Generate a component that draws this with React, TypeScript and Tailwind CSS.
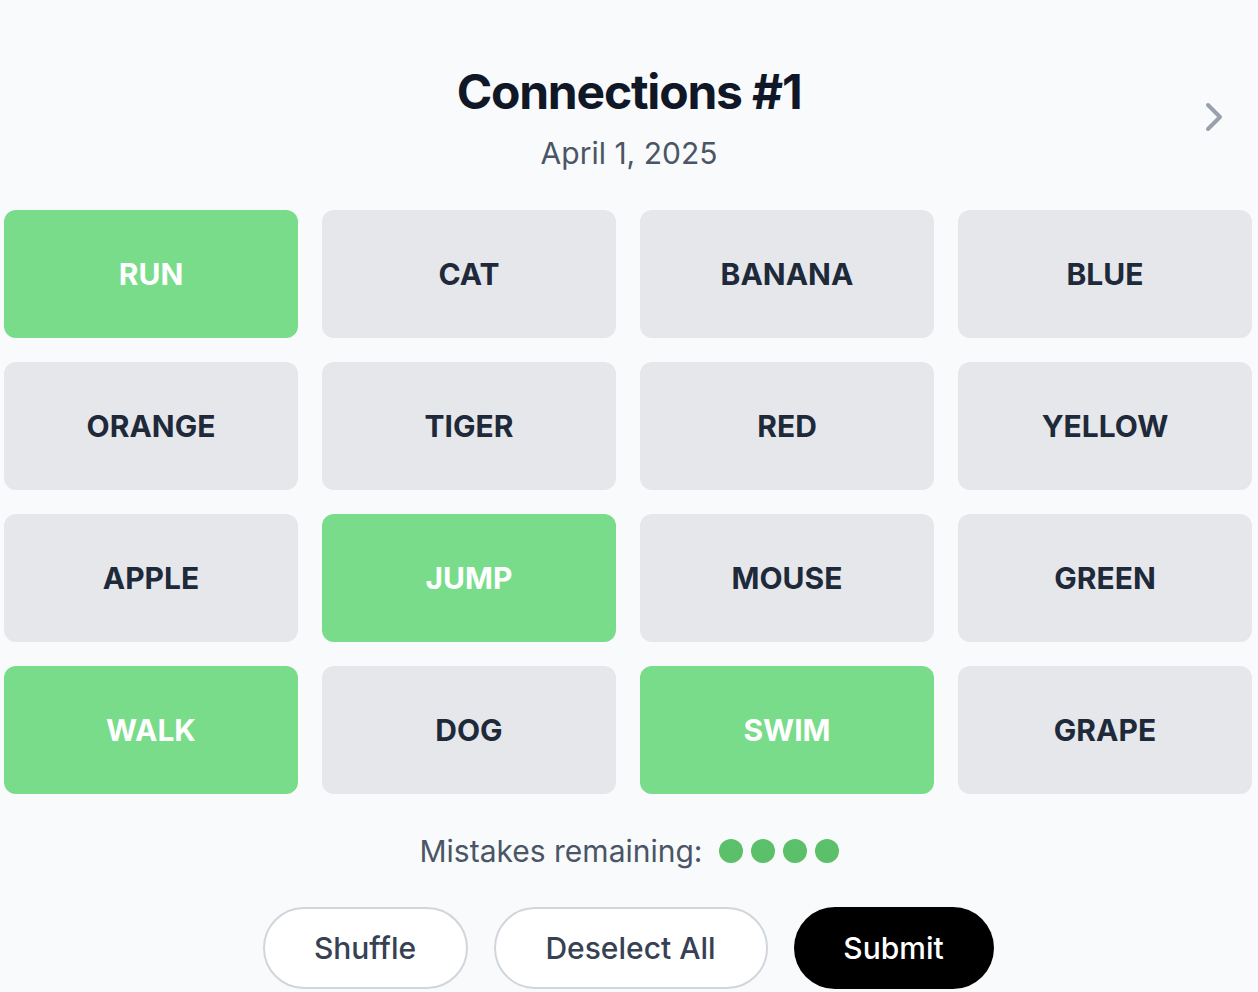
import React, { useState } from 'react';
import { ChevronRight } from 'lucide-react';

const WORDS = [
    'RUN', 'CAT', 'BANANA', 'BLUE',
    'ORANGE', 'TIGER', 'RED', 'YELLOW',
    'APPLE', 'JUMP', 'MOUSE', 'GREEN',
    'WALK', 'DOG', 'SWIM', 'GRAPE',
];

const App = () => {
    const [selected, setSelected] = useState<string[]>(['RUN', 'JUMP', 'WALK', 'SWIM']);
    const mistakes = 4;

    const toggle = (word: string) => {
        setSelected(prev =>
            prev.includes(word) ? prev.filter(w => w !== word) : prev.length < 4 ? [...prev, word] : prev
        );
    };

    return (
        <div className="min-h-screen bg-gray-50 font-['Inter','Liberation_Sans',sans-serif]">
            {/* header */}
            <div className="grid grid-cols-[1fr_auto_1fr] items-center pt-[68px]">
                <div />
                <div className="text-center">
                    <h1 className="text-5xl font-bold text-gray-900 tracking-tight">Connections #1</h1>
                    <p className="mt-[19px] text-3xl text-gray-600">April 1, 2025</p>
                </div>
                <div className="flex justify-end pr-[20px] mb-[5px]">
                    <ChevronRight size={48} strokeWidth={2} className="text-gray-400" />
                </div>
            </div>

            {/* word grid */}
            <div className="mt-[39px] ml-[4px] w-[1248px] grid grid-cols-4 gap-6">
                {WORDS.map(word => {
                    const on = selected.includes(word);
                    return (
                        <button
                            key={word}
                            onClick={() => toggle(word)}
                            className={`h-[128px] rounded-xl text-3xl font-bold uppercase ${on ? 'bg-[#78dc8a] text-white' : 'bg-gray-200 text-gray-800'}`}
                        >
                            {word}
                        </button>
                    );
                })}
            </div>

            <div className="mt-[39px] flex items-center justify-center gap-4">
                <span className="text-3xl text-gray-600">Mistakes remaining:</span>
                <div className="flex gap-2">
                    {Array.from({ length: mistakes }).map((_, i) => (
                        <span key={i} className="w-6 h-6 rounded-full bg-[#5cc06b]" />
                    ))}
                </div>
            </div>

            <div className="mt-[38px] flex justify-center gap-[26px] pr-[2px]">
                <button className="h-[82px] w-[205px] rounded-full border-2 border-gray-300 bg-white text-3xl font-medium text-gray-700">
                    Shuffle
                </button>
                <button
                    onClick={() => setSelected([])}
                    className="h-[82px] w-[274px] rounded-full border-2 border-gray-300 bg-white text-3xl font-medium text-gray-700"
                >
                    Deselect All
                </button>
                <button className="h-[82px] w-[200px] rounded-full bg-black text-3xl font-medium text-white">
                    Submit
                </button>
            </div>
        </div>
    );
};

export default App;
